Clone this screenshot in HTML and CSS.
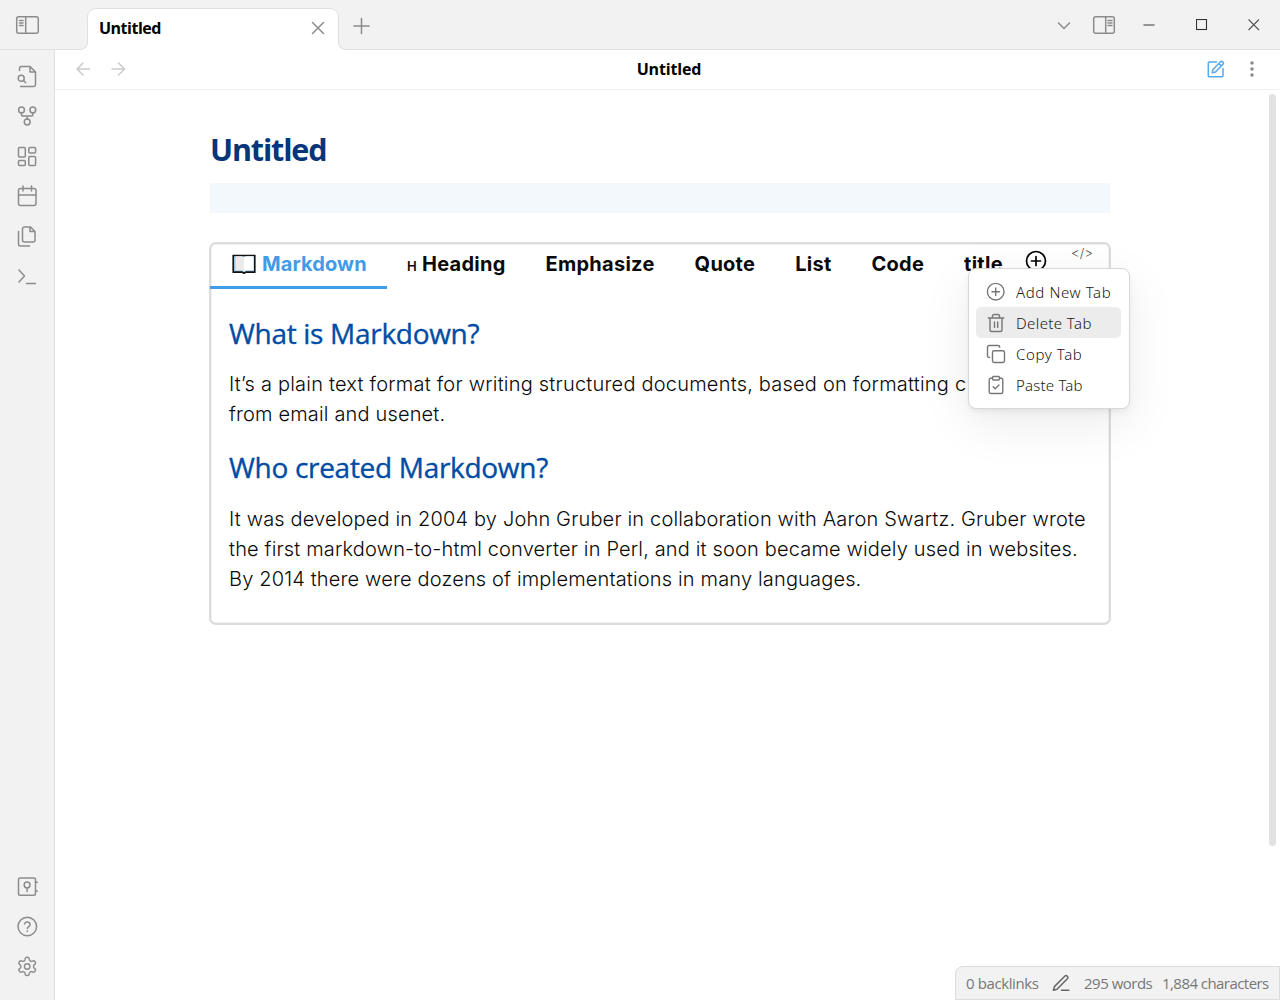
FILE: index.html
```html
<!DOCTYPE html>
<html lang="en">
<head>
<meta charset="utf-8">
<title>Untitled</title>
<link rel="stylesheet" href="styles.css">
</head>
<body>
<div class="app">
  <header class="titlebar">
    <div class="sidebar-toggle">
      <svg class="icon" width="24" height="20" viewBox="0 0 24 20"><rect x="1.7" y="1.7" width="21.6" height="16.6" rx="2"/><path d="M10.7 2v16M4.5 5.5h3.5M4.5 8h3.5M4.5 10.5h3.5"/></svg>
    </div>
    <div class="tab">
      <span class="tab-title">Untitled</span>
      <svg class="icon tab-close" width="14" height="14" viewBox="0 0 14 14"><path d="M1.5 1.5l11 11M12.5 1.5l-11 11"/></svg>
    </div>
    <svg class="icon new-tab" width="16" height="16" viewBox="0 0 16 16"><path d="M7.500 .5v15M0 8h15"/></svg>
    <div class="window-tools">
      <svg class="icon chevron" width="14" height="10" viewBox="0 0 14 10"><path d="M1.5 2l5.5 5.5L12.500 2"/></svg>
      <svg class="icon panel-right" width="24" height="20" viewBox="0 0 24 20"><rect x="1.700" y="1.700" width="20.600" height="16.600" rx="2"/><path d="M13.700 2v16M16 5.500h4M16 8h4M16 10.500h4"/></svg>
      <svg class="icon minimize" width="12" height="12" viewBox="0 0 12 12"><path d="M1 6h10"/></svg>
      <svg class="maximize" width="12" height="12" viewBox="0 0 12 12"><rect x=".5" y=".5" width="10" height="10"/></svg>
      <svg class="close-window" width="12" height="12" viewBox="0 0 12 12"><path d="M.5.5l10.500 10.500M11 .5L.5 11"/></svg>
    </div>
  </header>
  <div class="body">
    <nav class="ribbon">
      <div class="ribbon-group">
        <svg class="icon" width="22" height="24" viewBox="-0.500 -0.500 22 24"><path d="M3 6V4a2 2 0 0 1 2-2h8.500L19 7.500V20a2 2 0 0 1-2 2H4M13.500 2v5.500H19"/><circle cx="4.700" cy="13.800" r="3"/><path d="M7 16l2.200 2.200"/></svg>
        <svg class="icon" width="22" height="24" viewBox="-0.500 -0.500 22 24"><circle cx="5" cy="5.500" r="2.900"/><circle cx="16.300" cy="5.500" r="2.900"/><circle cx="10.700" cy="17.500" r="2.900"/><path d="M5 8.400v2.100a1 1 0 0 0 1 1h9.300a1 1 0 0 0 1-1V8.400M10.700 11.500v3"/></svg>
        <svg class="icon" width="22" height="24" viewBox="-0.500 -0.500 22 24"><rect x="2" y="3" width="6.800" height="9.500" rx="1"/><rect x="12.300" y="3" width="6.800" height="5.400" rx="1"/><rect x="12.300" y="11.900" width="6.800" height="9.200" rx="1"/><rect x="2" y="16" width="6.800" height="5.100" rx="1"/></svg>
        <svg class="icon" width="22" height="24" viewBox="-0.500 -0.500 22 24"><rect x="2" y="4" width="17.500" height="17" rx="2"/><path d="M6.500 1.500v5M15 1.500v5M2 10.500h17.500"/></svg>
        <svg class="icon" width="22" height="24" viewBox="-0.500 -0.500 22 24"><path d="M2 7v12.500a2 2 0 0 0 2 2h9"/><path d="M14 2.500H8a2 2 0 0 0-2 2v11a2 2 0 0 0 2 2h8.500a2 2 0 0 0 2-2V7L14 2.500zM13.500 2.500V7h5"/></svg>
        <svg class="icon" width="22" height="24" viewBox="-0.500 -0.500 22 24"><path d="M2.500 5.500L8 11.500l-5.500 6M10 19h9"/></svg>
      </div>
      <div class="ribbon-group">
        <svg class="icon" width="22" height="24" viewBox="-0.500 -0.500 22 24"><rect x="2" y="3.500" width="17" height="17.200" rx="1.500"/><circle cx="10.600" cy="10.500" r="2.900"/><path d="M10.600 13.400v3.600M19 7.800h1.800M19 16.500h1.800"/></svg>
        <svg class="icon" width="22" height="24" viewBox="-0.500 -0.500 22 24"><circle cx="10.800" cy="12" r="9.300"/><path d="M8 9.400a2.900 2.900 0 0 1 5.600.9c0 1.900-2.800 2.200-2.800 3.700M10.800 16.500v.6"/></svg>
        <svg class="icon" width="22" height="24" viewBox="-0.200 -0.500 24 24"><path d="M12.220 2h-.44a2 2 0 0 0-2 2v.18a2 2 0 0 1-1 1.730l-.43.25a2 2 0 0 1-2 0l-.15-.08a2 2 0 0 0-2.730.73l-.22.38a2 2 0 0 0 .73 2.730l.15.1a2 2 0 0 1 1 1.720v.51a2 2 0 0 1-1 1.740l-.15.09a2 2 0 0 0-.73 2.730l.22.38a2 2 0 0 0 2.730.73l.15-.08a2 2 0 0 1 2 0l.43.25a2 2 0 0 1 1 1.730V20a2 2 0 0 0 2 2h.44a2 2 0 0 0 2-2v-.18a2 2 0 0 1 1-1.730l.43-.25a2 2 0 0 1 2 0l.15.08a2 2 0 0 0 2.730-.73l.22-.39a2 2 0 0 0-.73-2.730l-.15-.08a2 2 0 0 1-1-1.740v-.5a2 2 0 0 1 1-1.740l.15-.09a2 2 0 0 0 .73-2.730l-.22-.38a2 2 0 0 0-2.730-.73l-.15.08a2 2 0 0 1-2 0l-.43-.25a2 2 0 0 1-1-1.730V4a2 2 0 0 0-2-2z"/><circle cx="12" cy="12" r="3"/></svg>
      </div>
    </nav>
    <main class="workspace">
      <div class="view-header">
        <div class="nav-buttons">
          <svg class="icon" width="15" height="14" viewBox="0 0 15 14"><path d="M13.500 7H1.200M7 1L1 7l6 6"/></svg>
          <svg class="icon" width="15" height="14" viewBox="0 0 15 14"><path d="M1 7h12.300M7.500 1l6 6-6 6"/></svg>
        </div>
        <span class="view-title">Untitled</span>
        <div class="view-actions">
          <svg class="icon edit" width="18" height="18" viewBox="0 0 18 18"><path d="M9.500 2H2.300a1 1 0 0 0-1 1v12.700a1 1 0 0 0 1 1H15a1 1 0 0 0 1-1V8.500"/><path d="M13.300 1.900a1.700 1.700 0 0 1 2.500 2.500L8.500 12l-3.300.8.8-3.300zM11.800 3.500l2.400 2.400"/></svg>
          <svg class="more" width="6" height="18" viewBox="0 0 6 18"><circle cx="3" cy="3" r="1.800"/><circle cx="3" cy="9" r="1.800"/><circle cx="3" cy="15" r="1.800"/></svg>
        </div>
      </div>
      <div class="view-content">
        <article class="note">
          <h1 class="note-title">Untitled</h1>
          <div class="active-line"></div>
          <section class="tabs-card">
            <div class="tabs-nav">
              <div class="tab-item active"><svg class="book" width="24" height="20" viewBox="0 0 24 20"><path class="cover" d="M1.200 1.500h21.600v16.600H14L12 19.300 10 18.100H1.200z"/><path class="leaf" d="M3.500 2.200h6L12 3v14.500l-2.500-1.200h-6z"/><path class="page" d="M12 3l2.500-.8H21.500v14.100h-7L12 17.500z"/></svg><span class="label-markdown">Markdown</span></div>
              <div class="tab-item"><span class="h-mark">H</span><span>Heading</span></div>
              <div class="tab-item">Emphasize</div>
              <div class="tab-item">Quote</div>
              <div class="tab-item">List</div>
              <div class="tab-item">Code</div>
              <div class="tab-item">title</div>
              <svg class="add-tab" width="22" height="22" viewBox="0 0 22 22"><circle cx="11" cy="11" r="9.500"/><path d="M11 6.500v9M6.500 11h9"/></svg>
              <span class="code-mark">&lt;/&gt;</span>
            </div>
            <div class="tab-body">
              <h2>What is Markdown?</h2>
              <p><span class="line intro">It’s a plain text format for writing structured documents, based on formatting c</span><span class="line">from email and usenet.</span></p>
              <h2 class="second">Who created Markdown?</h2>
              <p><span class="line">It was developed in 2004 by John Gruber in collaboration with Aaron Swartz. Gruber wrote</span><span class="line">the first markdown-to-html converter in Perl, and it soon became widely used in websites.</span><span class="line">By 2014 there were dozens of implementations in many languages.</span></p>
            </div>
          </section>
        </article>
        <div class="scrollbar"></div>
      </div>
    </main>
  </div>
  <div class="menu">
    <div class="menu-item"><svg class="icon" width="20" height="20" viewBox="0 0 20 20"><circle cx="9.700" cy="9.700" r="8.300"/><path d="M9.700 6v7.500M6 9.700h7.500"/></svg><span>Add New Tab</span></div>
    <div class="menu-item hover"><svg class="icon" width="20" height="20" viewBox="0 0 20 20"><path d="M2.200 5h15.600M16 5v12a1.500 1.500 0 0 1-1.500 1.500h-9A1.500 1.500 0 0 1 4 17V5M6.500 5V3A1.500 1.500 0 0 1 8 1.500h4A1.500 1.500 0 0 1 13.500 3v2M8.500 9v5.500M11.700 9v5.500"/></svg><span class="tight">Delete Tab</span></div>
    <div class="menu-item"><svg class="icon" width="20" height="20" viewBox="0 0 20 20"><rect x="6.500" y="6.700" width="12" height="11.800" rx="1.700"/><path d="M3.500 13.500A1.700 1.700 0 0 1 1.500 12V3.200a1.700 1.700 0 0 1 1.700-1.700H12a1.700 1.700 0 0 1 1.700 1.700"/></svg><span>Copy Tab</span></div>
    <div class="menu-item"><svg class="icon" width="20" height="20" viewBox="0 0 20 20"><rect x="6.500" y="1.500" width="7" height="3.500" rx="1"/><path d="M13.500 3.200h1.800A1.500 1.500 0 0 1 16.800 4.700V17a1.500 1.500 0 0 1-1.500 1.500H4.700A1.500 1.500 0 0 1 3.200 17V4.700a1.500 1.500 0 0 1 1.500-1.500h1.800M7.200 11.700l2 2 3.800-3.800"/></svg><span class="tighter">Paste Tab</span></div>
  </div>
  <footer class="status-bar">
    <span class="s-back">0 backlinks</span>
    <svg class="icon" width="18" height="18" viewBox="0 0 18 18"><path d="M9.500 16.300h7.300M12.700 2.200a1.800 1.800 0 0 1 2.600 2.600L5 15.200l-3.600 1 1-3.600z"/></svg>
    <span class="s-words">295 words</span>
    <span class="s-chars">1,884 characters</span>
  </footer>
</div>
</body>
</html>
```
FILE: styles.css
```css
* { box-sizing: border-box; }
body { margin: 0; background: #fff; color: #0a0a0a; font-family: "Open Sans", "Noto Sans", sans-serif; }
svg { display: block; flex: none; }
.icon { fill: none; stroke: #8c8c8c; stroke-width: 1.5; stroke-linecap: round; stroke-linejoin: round; }
.app { position: relative; display: flex; flex-direction: column; width: 1280px; height: 1000px; overflow: hidden; }

.titlebar { display: flex; height: 50px; background: #f2f2f2; border-bottom: 1px solid #e0e0e0; }
.sidebar-toggle { width: 87px; padding: 15px 0 0 15px; }
.tab { position: relative; display: flex; align-items: center; justify-content: space-between; width: 252px; height: 42px; margin-top: 8px; padding: 0 13px 3px 11px; background: #fff; border: 1px solid #e0e0e0; border-bottom: 0; border-radius: 9px 9px 0 0; }
.tab::before, .tab::after { content: ""; position: absolute; bottom: 0; width: 8px; height: 8px; }
.tab::before { left: -8px; background: radial-gradient(circle at 0 0, #f2f2f2 6.600px, #e0e0e0 7.100px 7.700px, #fff 8.200px); }
.tab::after { right: -8px; background: radial-gradient(circle at 100% 0, #f2f2f2 6.600px, #e0e0e0 7.100px 7.700px, #fff 8.200px); }
.tab-title { font-size: 16px; font-weight: 700; color: #000; letter-spacing: -0.5px; }
.new-tab { margin: 18px 0 0 15px; stroke: #8a8a8a; overflow: visible; }
.window-tools { display: flex; margin-left: auto; padding-right: 20px; }
.chevron { margin-top: 21px; }
.panel-right { margin: 15px 0 0 21px; }
.minimize { margin: 19px 0 0 27px; stroke: #777; }
.maximize { margin: 19px 0 0 41px; fill: none; stroke: #333; stroke-width: 1.100; }
.close-window { margin: 19px 0 0 40px; fill: none; stroke: #555; stroke-width: 1.100; }

.body { display: flex; flex: 1; min-height: 0; }
.ribbon { display: flex; flex-direction: column; justify-content: space-between; width: 55px; padding: 14px 0 22px 16px; background: #f2f2f2; border-right: 1px solid #e0e0e0; }
.ribbon-group { display: flex; flex-direction: column; gap: 16px; }
.workspace { display: flex; flex-direction: column; flex: 1; }
.view-header { display: flex; align-items: center; height: 40px; padding: 0 25px 2px 21px; border-bottom: 1px solid #f0f0f0; }
.nav-buttons { display: flex; gap: 20px; width: 100px; }
.nav-buttons .icon { stroke: #cacaca; }
.view-title { flex: 1; text-align: center; font-size: 16px; font-weight: 700; color: #000; letter-spacing: -0.150px; padding-right: 45px; }
.view-actions { display: flex; gap: 24px; width: 48px; }
.edit { stroke: #56abec; }
.more { fill: #8c8c8c; }
.view-content { display: flex; justify-content: center; flex: 1; position: relative; }
.scrollbar { position: absolute; right: 4px; top: 4px; width: 7px; height: 752px; border-radius: 4px; background: #e2e2e2; }

.note { width: 902px; margin-right: 15px; }
.note-title { margin: 37px 0 0 1px; height: 45px; line-height: 44px; font-size: 30.500px; font-weight: 700; color: #06357a; letter-spacing: -1.150px; }
.active-line { height: 30px; margin: 11px 1px 29px; background: #f3f8fd; }
.tabs-card { height: 383px; padding: 1px; border: 2px solid #dcdcdc; border-radius: 7px; box-shadow: inset 0 0 0 1px #f1f1f1; }
.tabs-nav { display: flex; height: 44px; margin-left: -2px; font: 700 20px/38px Inter, sans-serif; letter-spacing: .26px; }
.tab-item { display: flex; height: 44px; padding: 0 20px; }
.active { color: #409be8; border-bottom: 3px solid #409be8; width: 177px; }
.book { margin: 9px 6px 0 2px; }
.label-markdown { letter-spacing: .1px; }
.cover { fill: #9cc9ea; stroke: #111; stroke-width: 1.600; }
.leaf { fill: #ebebeb; }
.page { fill: #fff; }
.h-mark { font-size: 13px; font-weight: 600; line-height: 42px; margin-right: 5px; }
.add-tab { margin: 5px 0 0 2px; fill: none; stroke: #000; stroke-width: 1.700; stroke-linecap: round; }
.code-mark { margin: -11px 0 0 24px; font-size: 13px; font-weight: 300; color: #555; }
.tab-body { padding: 24px 17px 0; font: 300 20px/30px Inter, sans-serif; letter-spacing: .160px; }
.tab-body h2 { margin: 0; height: 40px; font: 500 28px/40px "Open Sans", sans-serif; color: #004ca5; letter-spacing: -0.300px; -webkit-text-stroke: .35px #004ca5; }
.tab-body p { margin: 16px 0 0; }
.tab-body h2.second { margin-top: 18px; }
.tab-body h2.second + p { margin-top: 17px; }
.line { display: block; white-space: nowrap; }
.intro { letter-spacing: .215px; }

.menu { position: absolute; left: 968px; top: 268px; width: 162px; height: 141px; padding: 7px; background: #fff; border: 1px solid #d8d8d8; border-radius: 8px; box-shadow: 0 2px 3px rgba(0,0,0,.03), 0 4px 8px rgba(0,0,0,.04), 0 15px 50px rgba(0,0,0,.08); }
.menu-item { display: flex; align-items: center; height: 31px; width: 145px; padding-left: 10px; gap: 10px; border-radius: 5px; font: 300 15px/31px "Noto Sans", sans-serif; color: #1a1a1a; letter-spacing: .6px; white-space: nowrap; }
.menu-item span { padding-top: 2px; }
.menu-item .tight { letter-spacing: .4px; }
.menu-item .tighter { letter-spacing: .2px; }
.hover { background: #ececec; }
.menu-item .icon { stroke: #777; stroke-width: 1.400; }

.status-bar { position: absolute; right: 0; bottom: 0; display: flex; align-items: center; width: 325px; height: 34px; padding-left: 10px; background: #f2f2f2; border: 1px solid #dcdcdc; border-radius: 8px 0 0 0; font-size: 15px; color: #777; white-space: nowrap; letter-spacing: -.4px; }
.s-back { width: 86px; }
.s-words { margin-left: 14px; width: 78px; letter-spacing: -.5px; }
.s-chars { letter-spacing: -.55px; }
.status-bar .icon { stroke: #666; }
```
